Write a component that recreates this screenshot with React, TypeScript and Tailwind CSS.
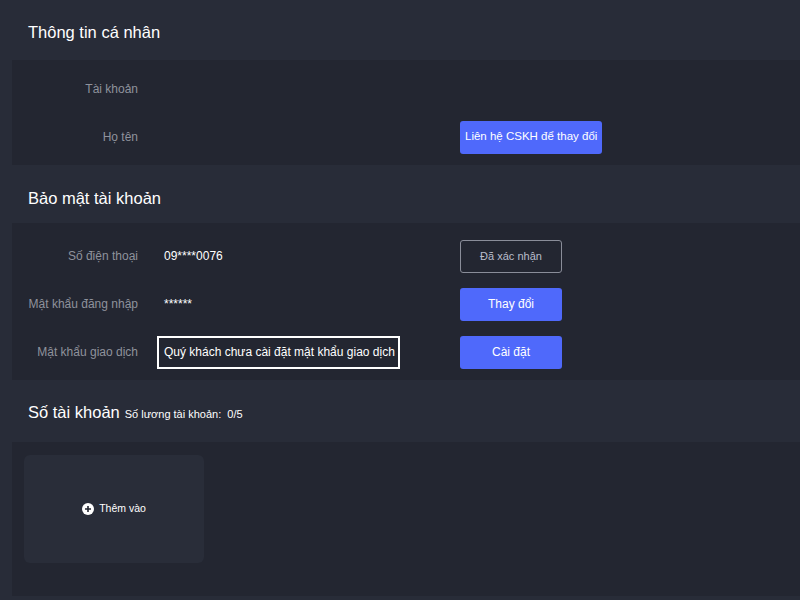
import React from 'react';

const font = { fontFamily: '"Liberation Sans", Arial, sans-serif' };

function Row({ label, children, action }: { label: string; children?: React.ReactNode; action?: React.ReactNode }) {
  return (
    <div className="flex h-12 items-center">
      <div className="w-[126px] shrink-0 whitespace-nowrap text-right text-[12px] text-[#8f929c]">{label}</div>
      <div className="ml-[19px] w-[303px] shrink-0 text-[12px] text-white">{children}</div>
      <div>{action}</div>
    </div>
  );
}

const blueBtn = 'flex h-[33px] w-[102px] items-center justify-center rounded-[3px] bg-[#4f69fb] text-[12px] text-white';

export default function App() {
  return (
    <div className="min-h-[600px] w-[800px] bg-[#282c38] pb-[4px]" style={font}>
      {/* Thông tin cá nhân */}
      <div className="pl-[28px] pt-[21px] pb-[17px] text-[16.5px] leading-[22px] text-white">Thông tin cá nhân</div>
      <div className="ml-[12px] bg-[#232631] pt-[5px] pb-[4px]">
        <Row label="Tài khoản" />
        <Row
          label="Họ tên"
          action={
            <div className="flex h-[33px] items-center whitespace-nowrap rounded-[3px] bg-[#4f69fb] px-[5px] text-[11.5px] text-white">
              Liên hệ CSKH để thay đổi
            </div>
          }
        />
      </div>

      {/* Bảo mật tài khoản */}
      <div className="pl-[28px] pt-[22px] pb-[14px] text-[16.5px] leading-[22px] text-white">Bảo mật tài khoản</div>
      <div className="ml-[12px] bg-[#232631] pt-[9px] pb-[4px]">
        <Row
          label="Số điện thoại"
          action={
            <div className="flex h-[33px] w-[102px] items-center justify-center rounded-[3px] border border-[#8a8d99] text-[11px] text-[#b9bdcc]">
              Đã xác nhận
            </div>
          }
        >
          <span className="pl-[7px]">09****0076</span>
        </Row>
        <Row label="Mật khẩu đăng nhập" action={<div className={blueBtn}>Thay đổi</div>}>
          <span className="pl-[7px]">******</span>
        </Row>
        <Row label="Mật khẩu giao dịch" action={<div className={blueBtn}>Cài đặt</div>}>
          <div className="flex h-[33px] w-[243px] items-center whitespace-nowrap border-2 border-white px-[5px]">
            Quý khách chưa cài đặt mật khẩu giao dịch
          </div>
        </Row>
      </div>

      {/* Số tài khoản */}
      <div className="flex items-baseline gap-[5px] pl-[28px] pt-[21px] pb-[19px] text-white">
        <span className="text-[16.5px] leading-[22px]">Số tài khoản</span>
        <span className="text-[11px]">
          Số lương tài khoản:<span className="ml-[6px]">0/5</span>
        </span>
      </div>
      <div className="ml-[12px] h-[154px] bg-[#232631] pl-[12px] pt-[13px]">
        <div className="flex h-[108px] w-[180px] items-center justify-center gap-[5px] rounded-[6px] bg-[#292d39] text-[10.5px] text-white">
          <svg width="12" height="12" viewBox="0 0 12 12">
            <circle cx="6" cy="6" r="6" fill="#ffffff" />
            <path d="M6 3v6M3 6h6" stroke="#232631" strokeWidth="1.6" />
          </svg>
          Thêm vào
        </div>
      </div>
    </div>
  );
}
